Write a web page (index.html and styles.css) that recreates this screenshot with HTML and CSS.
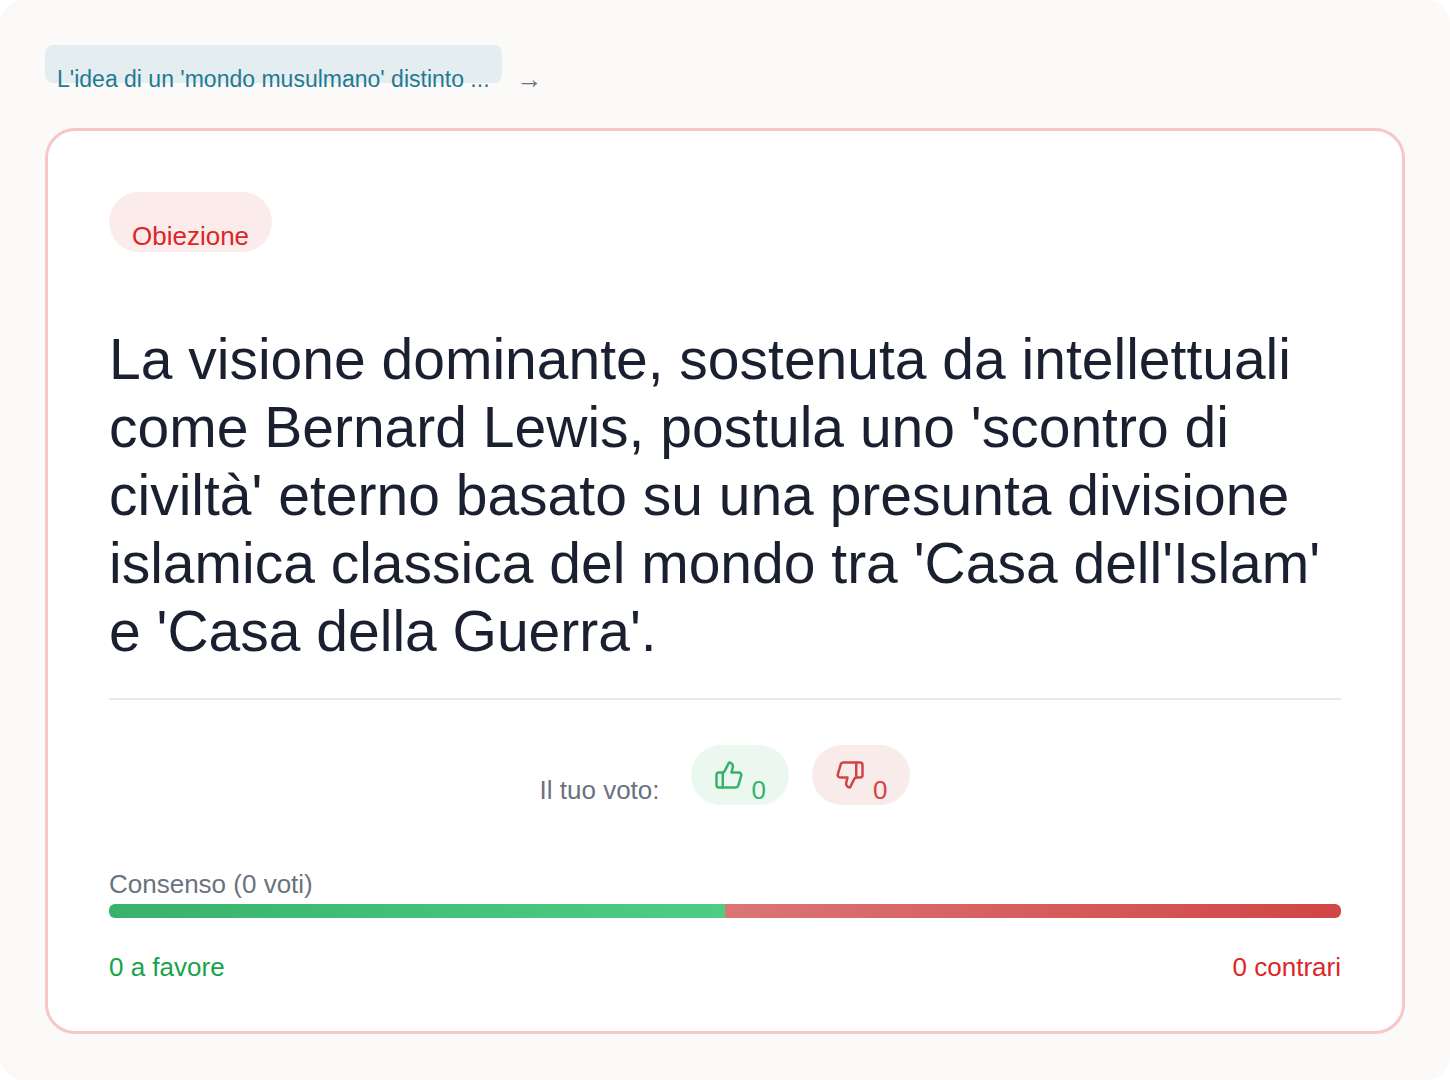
FILE: index.html
```
<!DOCTYPE html>
<html lang="it">
<head>
    <meta charset="UTF-8">
    <meta name="viewport" content="width=device-width, initial-scale=1">
    <title>Obiezione</title>
    <link rel="stylesheet" href="styles.css">
</head>
<body>
    <main class="app">
        <nav class="breadcrumb">
            <a class="crumb" href="#">L'idea di un 'mondo musulmano' distinto ...</a>
            <span class="crumb-arrow">→</span>
        </nav>

        <article class="card">
            <span class="badge">Obiezione</span>
            <h1 class="thesis">La visione dominante, sostenuta da intellettuali come Bernard Lewis, postula uno 'scontro di civiltà' eterno basato su una presunta divisione islamica classica del mondo tra 'Casa dell'Islam' e 'Casa della Guerra'.</h1>

            <div class="votes">
                <span class="votes-label">Il tuo voto:</span>
                <div class="vote-buttons">
                    <button class="vote vote-up" type="button" aria-label="A favore">
                        <svg class="icon" viewBox="0 0 24 24">
                            <path d="M7 10v12"/>
                            <path d="M15 5.88 14 10h5.83a2 2 0 0 1 1.92 2.56l-2.33 8A2 2 0 0 1 17.5 22H4a2 2 0 0 1-2-2v-8a2 2 0 0 1 2-2h2.76a2 2 0 0 0 1.79-1.11L12 2a3.13 3.13 0 0 1 3 3.88Z"/>
                        </svg>
                        <span class="vote-count">0</span>
                    </button>
                    <button class="vote vote-down" type="button" aria-label="Contrario">
                        <svg class="icon" viewBox="0 0 24 24">
                            <path d="M17 14V2"/>
                            <path d="M9 18.12 10 14H4.17a2 2 0 0 1-1.92-2.56l2.33-8A2 2 0 0 1 6.5 2H20a2 2 0 0 1 2 2v8a2 2 0 0 1-2 2h-2.76a2 2 0 0 0-1.79 1.11L12 22a3.13 3.13 0 0 1-3-3.88Z"/>
                        </svg>
                        <span class="vote-count">0</span>
                    </button>
                </div>
            </div>

            <section class="consensus">
                <div class="consensus-label">Consenso (0 voti)</div>
                <div class="bar">
                    <div class="bar-for" style="width: 50%"></div>
                    <div class="bar-against" style="width: 50%"></div>
                </div>
                <div class="totals">
                    <span class="total-for">0 a favore</span>
                    <span class="total-against">0 contrari</span>
                </div>
            </section>
        </article>
    </main>
</body>
</html>
```
FILE: styles.css
```
* {
    box-sizing: border-box;
}

body {
    margin: 0;
    background: #ffffff;
    font-family: "Liberation Sans", Arial, sans-serif;
    font-size: 26px;
    line-height: 30px;
    color: #6b7280;
}

.app {
    min-height: 100vh;
    padding: 45px;
    background: #fbfaf8;
    border-radius: 24px;
}

.breadcrumb {
    display: flex;
    gap: 15px;
    height: 38px;
    margin-bottom: 45px;
    line-height: 68px;
}

.crumb {
    padding: 0 12px;
    border-radius: 8px;
    background: #e4edef;
    color: #1f7a94;
    font-size: 23px;
    text-decoration: none;
    white-space: nowrap;
}

.card {
    padding: 61px 61px 49px;
    border: 3px solid #f9c6c6;
    border-radius: 30px;
    background: #ffffff;
}

.badge {
    display: block;
    width: fit-content;
    height: 60px;
    padding: 0 23px;
    border-radius: 30px;
    background: #fcebeb;
    color: #dc2626;
    line-height: 88px;
}

.thesis {
    margin: 73px 0 33px;
    font-size: 57px;
    font-weight: 400;
    line-height: 68px;
    color: #1a2030;
}

.votes {
    display: flex;
    justify-content: center;
    gap: 31px;
    padding-top: 45px;
    border-top: 2px solid #e8e8e5;
    line-height: 90px;
}

.votes-label {
    height: 60px;
}

.vote-buttons {
    display: flex;
    gap: 23px;
}

.vote {
    display: flex;
    gap: 8px;
    height: 60px;
    padding: 0 23px;
    border: none;
    border-radius: 30px;
    font: inherit;
    cursor: pointer;
}

.vote-up {
    background: #ebf8f0;
    color: #38b26b;
}

.vote-down {
    background: #f9ebea;
    color: #d14545;
}

.icon {
    width: 30px;
    height: 30px;
    align-self: center;
    fill: none;
    stroke: currentColor;
    stroke-width: 2;
    stroke-linecap: round;
    stroke-linejoin: round;
}

.consensus {
    margin-top: 64px;
}

.bar {
    display: flex;
    height: 14px;
    margin: 5px 0 34px;
    border-radius: 6px;
    overflow: hidden;
}

.bar-for {
    background: linear-gradient(135deg, #38b26b, #50cd84);
}

.bar-against {
    background: linear-gradient(135deg, #db7676, #d14545);
}

.totals {
    display: flex;
    justify-content: space-between;
}

.total-for {
    color: #16a34a;
}

.total-against {
    color: #dc2626;
}
```
